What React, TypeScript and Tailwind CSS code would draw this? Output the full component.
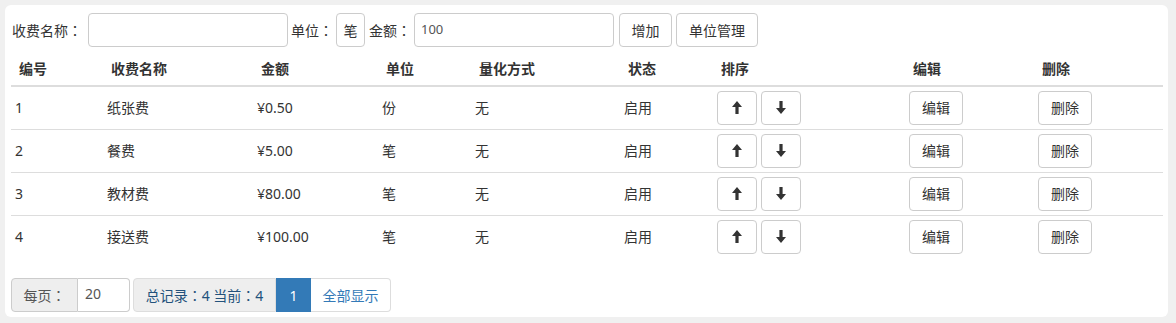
const rows = [
  { id: 1, name: '纸张费', amount: '¥0.50', unit: '份', mode: '无', status: '启用' },
  { id: 2, name: '餐费', amount: '¥5.00', unit: '笔', mode: '无', status: '启用' },
  { id: 3, name: '教材费', amount: '¥80.00', unit: '笔', mode: '无', status: '启用' },
  { id: 4, name: '接送费', amount: '¥100.00', unit: '笔', mode: '无', status: '启用' },
];

const cols = ['编号', '收费名称', '金额', '单位', '量化方式', '状态', '排序', '编辑', '删除'];
const widths = ['w-[92px]', 'w-[150px]', 'w-[125px]', 'w-[93px]', 'w-[149px]', 'w-[93px]', 'w-[192px]', 'w-[129px]', 'w-[129px]'];

// centred full-width colon, as in the screenshot
const Colon = () => <span className="font-['Noto_Sans_CJK_TC',sans-serif]">：</span>;

function Arrow({ down }: { down?: boolean }) {
  return (
    <svg width="10" height="13" viewBox="0 0 10 13" className={down ? 'rotate-180' : ''}>
      <path d="M5 0 L10 6 H6.6 V13 H3.4 V6 H0 Z" fill="#333" />
    </svg>
  );
}

function Btn({ children, className = '' }: { children: React.ReactNode; className?: string }) {
  return (
    <button className={`h-[34px] border border-[#ccc] rounded bg-white text-[#333] text-[14px] flex items-center justify-center ${className}`}>
      {children}
    </button>
  );
}

export default function App() {
  return (
    <div className="w-[1176px] h-[323px] bg-[#f0f0f0] pt-[5px] pl-[5px] font-['Noto_Sans','Noto_Sans_CJK_SC',sans-serif] text-[14px] text-[#333]">
      <div className="w-[1163px] h-[312px] bg-white rounded-md px-[6px] pt-[8px]">
        {/* form */}
        <div className="flex items-center h-[34px]">
          <span className="ml-[1px] mr-[6px]">收费名称<Colon /></span>
          <input className="w-[200px] h-[34px] border border-[#ccc] rounded px-3 outline-none" />
          <span className="ml-[3px] mr-[3px]">单位<Colon /></span>
          <div className="w-[29px] h-[34px] border border-[#ccc] rounded flex items-center justify-center">笔</div>
          <span className="ml-[4px] mr-[3px]">金额<Colon /></span>
          <input defaultValue="100" className="w-[200px] h-[34px] border border-[#ccc] rounded px-[6px] pb-[3px] outline-none text-[13px] text-[#555]" />
          <Btn className="ml-[5px] w-[53px]">增加</Btn>
          <Btn className="ml-[4px] w-[82px]">单位管理</Btn>
        </div>

        {/* table */}
        <table className="mt-[6px] w-[1152px] table-fixed border-collapse">
          <thead>
            <tr className="h-[33px] border-b-2 border-[#ddd]">
              {cols.map((c, i) => (
                <th key={c} className={`${widths[i]} text-left font-bold pl-[8px] pb-[2px]`}>{c}</th>
              ))}
            </tr>
          </thead>
          <tbody>
            {rows.map((r, i) => (
              <tr key={r.id} className={`h-[43px] ${i > 0 ? 'border-t border-[#ddd]' : ''}`}>
                <td className="pl-[4px]">{r.id}</td>
                <td className="pl-[4px]">{r.name}</td>
                <td className="pl-[4px]">{r.amount}</td>
                <td className="pl-[4px]">{r.unit}</td>
                <td className="pl-[4px]">{r.mode}</td>
                <td className="pl-[4px]">{r.status}</td>
                <td className="pl-[4px]">
                  <div className="flex gap-[4px]">
                    <Btn className="w-[40px]"><Arrow /></Btn>
                    <Btn className="w-[40px]"><Arrow down /></Btn>
                  </div>
                </td>
                <td className="pl-[4px]">
                  <Btn className="w-[54px]">编辑</Btn>
                </td>
                <td className="pl-[4px]">
                  <Btn className="w-[54px]">删除</Btn>
                </td>
              </tr>
            ))}
          </tbody>
        </table>

        {/* pager */}
        <div className="mt-[20px] flex items-center h-[34px]">
          <div className="flex h-[34px]">
            <span className="w-[67px] bg-[#eee] border border-[#ccc] rounded-l flex items-center justify-center text-[#555]">每页<Colon /></span>
            <input defaultValue="20" className="w-[52px] border border-l-0 border-[#ccc] rounded-r px-[7px] pb-[3px] outline-none text-[#555]" />
          </div>
          <div className="ml-[3px] flex h-[34px]">
            <span className="w-[143px] bg-[#eee] border border-[#ddd] rounded-l flex items-center justify-center text-[#23527c]">总记录<Colon />4 当前<Colon />4</span>
            <span className="w-[35px] bg-[#337ab7] text-white flex items-center justify-center">1</span>
            <span className="w-[80px] bg-white border border-[#ddd] border-l-0 rounded-r flex items-center justify-center text-[#337ab7]">全部显示</span>
          </div>
        </div>
      </div>
    </div>
  );
}
